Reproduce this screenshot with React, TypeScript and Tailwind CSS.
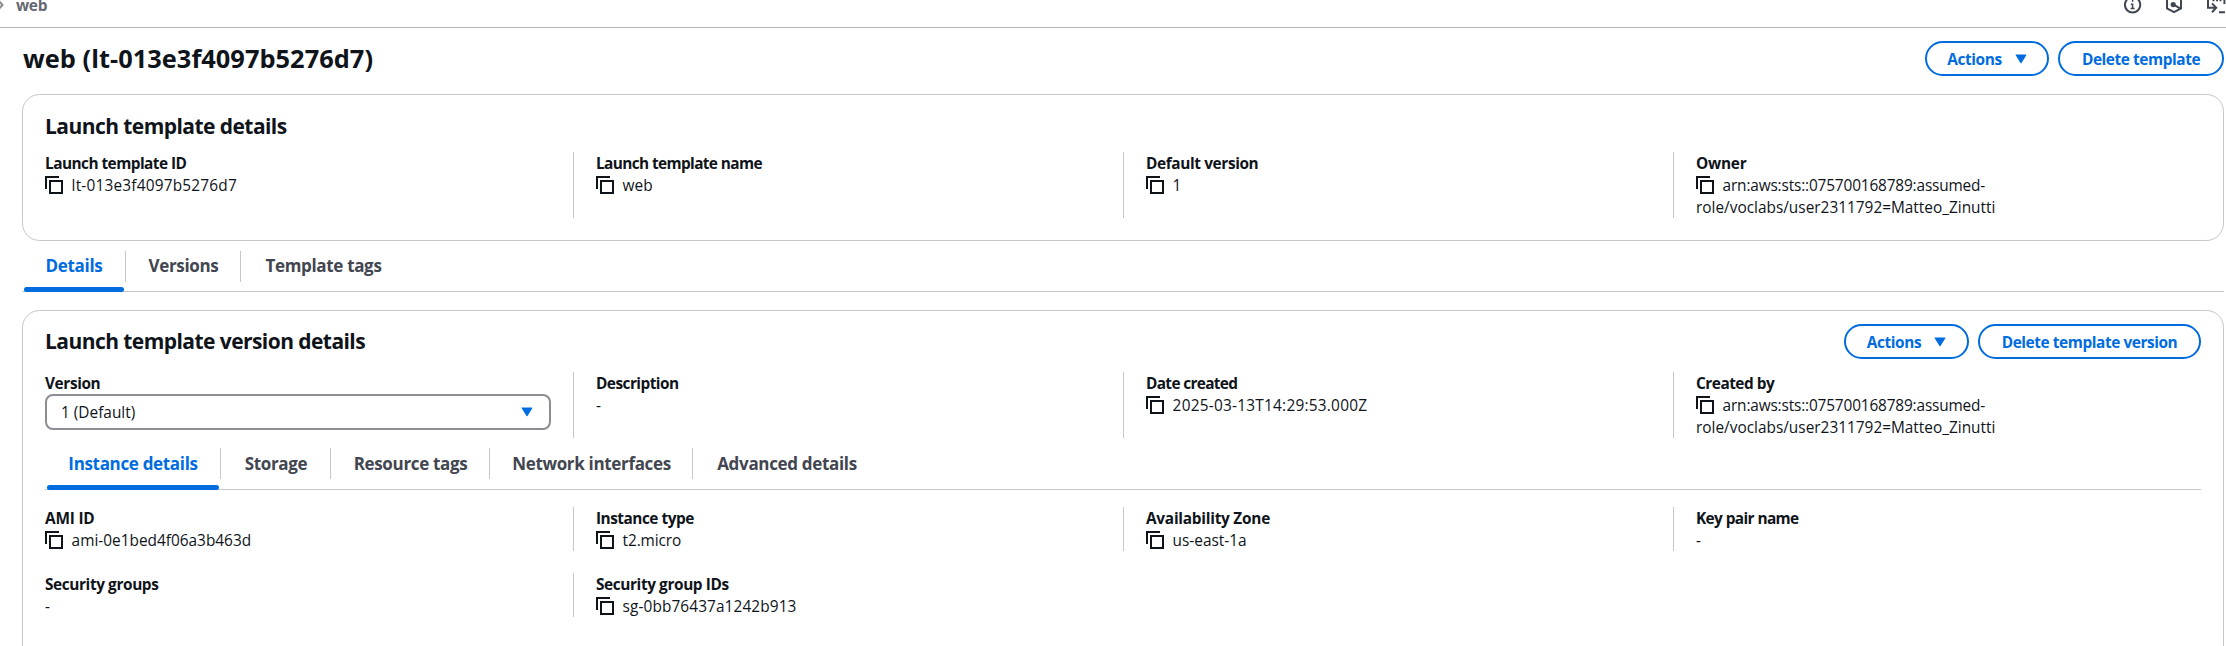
import React from "react";

const CopyIcon = () => (
  <svg className="mt-[2px] block h-[18px] w-[18px] shrink-0" viewBox="0 0 18 18" fill="none" stroke="#0f141a" strokeWidth="2">
    <path d="M1 13V1H14" />
    <rect x="5" y="5" width="12" height="12" />
  </svg>
);

const Caret = () => (
  <svg className="block h-[10px] w-[12px] shrink-0" viewBox="0 0 12 10">
    <path d="M1.2 1H10.8L6 8.6Z" fill="#006ce0" stroke="#006ce0" strokeWidth="1.2" strokeLinejoin="round" />
  </svg>
);

function Field({ label, value, value2, copy = true, first = false, ls = "", vs = "" }: {
  label: string; value: string; value2?: string; copy?: boolean; first?: boolean; ls?: string; vs?: string;
}) {
  return (
    <div className={first ? "w-[528px] shrink-0" : "w-[550px] shrink-0 border-l border-[#c6c6cd] pl-[22px]"}>
      <div className={`h-[22px] whitespace-nowrap leading-[24px] font-bold ${ls}`}>{label}</div>
      <div className={`flex h-[22px] whitespace-nowrap leading-[24px] ${vs}`}>
        {copy && <CopyIcon />}
        <span className={copy ? "ml-[8.6px]" : ""}>{value}</span>
      </div>
      {value2 && <div className="h-[22px] whitespace-nowrap leading-[24px]">{value2}</div>}
    </div>
  );
}

function Button({ children, caret = false, className }: { children: string; caret?: boolean; className: string }) {
  return (
    <button className={`flex h-[35px] items-center justify-center rounded-full border-2 border-[#006ce0] font-bold tracking-[-0.42px] text-[#006ce0] ${className}`}>
      <span className="pt-[2px] whitespace-nowrap">{children}</span>
      {caret && <span className="ml-[13px]"><Caret /></span>}
    </button>
  );
}

function Tab({ children, active = false, last = false, className }: { children: string; active?: boolean; last?: boolean; className: string }) {
  return (
    <div className={`relative flex h-full shrink-0 justify-center ${className}`}>
      <span className={`text-[17px] font-bold tracking-[-0.33px] whitespace-nowrap ${active ? "text-[#006ce0]" : "text-[#424650]"}`}>{children}</span>
      {!last && <span className="absolute top-0 right-0 h-[31px] w-px bg-[#c6c6cd]" />}
      {active && <span className="absolute right-[2px] -bottom-px left-[2px] h-[5px] rounded-[3px] bg-[#006ce0]" />}
    </div>
  );
}

export default function App() {
  return (
    <div className="h-[646px] w-[2226px] overflow-hidden bg-white font-['Open_Sans',sans-serif] text-[15.4px] leading-[22px] text-[#0f141a]">
      <header className="flex h-[28px] items-start justify-between border-b border-[#b4b4bb]">
        <div className="-mt-[5px] flex">
          <svg className="mt-[3px] h-[14px] w-[4px]" viewBox="0 0 4 14" fill="none" stroke="#8c8c94" strokeWidth="2"><path d="M-2 2L2.5 7L-2 12" /></svg>
          <span className="ml-[12px] font-bold tracking-[-0.3px] text-[#656871]">web</span>
        </div>
        <svg className="h-[16px] w-[102px]" viewBox="0 0 102 16" fill="none" stroke="#424650" strokeWidth="2">
          <circle cx="8.6" cy="4.8" r="7.7" />
          <path d="M8.6 3.6V9M8.6 0V1.8M6.8 4.2H8.6M6.6 8.6H10.6" strokeWidth="1.5" />
          <path d="M43 0V8.4L50 12.2L57 8.4V0" />
          <circle cx="49.2" cy="4.6" r="2.6" fill="#424650" stroke="none" />
          <path d="M49.5 4.6L56.5 8.6" />
          <path d="M84 0V7.8H91.5M88 3.4L92.2 7.8L88 12.2M95 12.2H101M100.4 0V4M89.5 0V1.2M93 0V1.2M96.5 0V1.2" />
        </svg>
      </header>

      <div className="flex h-[66px] items-start justify-between pt-[13px] pr-[2px] pl-[23px]">
        <h1 className="-mt-px text-[25.4px] leading-[36px] font-bold tracking-[0.03px] whitespace-nowrap">web (lt-013e3f4097b5276d7)</h1>
        <div className="flex gap-[9px]">
          <Button caret className="w-[124px]">Actions</Button>
          <Button className="w-[166px]">Delete template</Button>
        </div>
      </div>

      <section className="ml-[22px] h-[147px] w-[2202px] rounded-[17.6px] border border-[#c6c6cd] pl-[22px]">
        <h2 className="mt-[18px] h-[39px] text-[21px] leading-[27px] font-bold tracking-[-0.56px] whitespace-nowrap">Launch template details</h2>
        <div className="flex h-[66px]">
          <Field first label="Launch template ID" ls="tracking-[-0.54px]" value="lt-013e3f4097b5276d7" vs="tracking-[0.2px]" />
          <Field label="Launch template name" ls="tracking-[-0.62px]" value="web" />
          <Field label="Default version" ls="tracking-[-0.38px]" value="1" />
          <Field label="Owner" ls="tracking-[-0.25px]" value="arn:aws:sts::075700168789:assumed-" vs="tracking-[-0.16px]" value2="role/voclabs/user2311792=Matteo_Zinutti" />
        </div>
      </section>

      <nav className="mt-[10px] ml-[22px] flex h-[41px] w-[2202px] border-b border-[#c6c6cd] leading-[30px]">
        <Tab active className="w-[104px]">Details</Tab>
        <Tab className="w-[115px]">Versions</Tab>
        <Tab last className="w-[165px]">Template tags</Tab>
      </nav>

      <section className="mt-[18px] ml-[22px] h-[360px] w-[2202px] rounded-[17.6px] border border-[#c6c6cd] pr-[22px] pl-[22px]">
        <div className="flex h-[61px] items-start justify-between pt-[13px]">
          <h2 className="mt-[4px] text-[21px] leading-[27px] font-bold tracking-[-0.56px] whitespace-nowrap">Launch template version details</h2>
          <div className="flex gap-[9px]">
            <Button caret className="w-[125px]">Actions</Button>
            <Button className="w-[223px]">Delete template version</Button>
          </div>
        </div>
        <div className="flex h-[66px]">
          <div className="w-[528px] shrink-0">
            <div className="h-[22px] leading-[24px] font-bold tracking-[-0.4px]">Version</div>
            <div className="flex h-[36px] w-[506px] items-center justify-between rounded-[8px] border-2 border-[#8c8c94] pr-[16px] pl-[14px]">
              <span className="pt-[2px]">1 (Default)</span><Caret />
            </div>
          </div>
          <Field copy={false} label="Description" ls="tracking-[-0.54px]" value="-" />
          <Field label="Date created" ls="tracking-[-0.66px]" value="2025-03-13T14:29:53.000Z" vs="tracking-[0.24px]" />
          <Field label="Created by" ls="tracking-[-0.5px]" value="arn:aws:sts::075700168789:assumed-" vs="tracking-[-0.16px]" value2="role/voclabs/user2311792=Matteo_Zinutti" />
        </div>
        <nav className="mt-[10px] flex h-[42px] w-[2156px] border-b border-[#c6c6cd] leading-[31px]">
          <Tab active className="w-[176px]">Instance details</Tab>
          <Tab className="w-[110px]">Storage</Tab>
          <Tab className="w-[159px]">Resource tags</Tab>
          <Tab className="w-[203px]">Network interfaces</Tab>
          <Tab last className="w-[188px]">Advanced details</Tab>
        </nav>
        <div className="mt-[17px] flex h-[44px]">
          <Field first label="AMI ID" ls="tracking-[-0.2px]" value="ami-0e1bed4f06a3b463d" />
          <Field label="Instance type" ls="tracking-[-0.5px]" value="t2.micro" vs="tracking-[-0.1px]" />
          <Field label="Availability Zone" ls="tracking-[-0.25px]" value="us-east-1a" />
          <Field copy={false} label="Key pair name" ls="tracking-[-0.6px]" value="-" />
        </div>
        <div className="mt-[22px] flex h-[44px]">
          <Field first copy={false} label="Security groups" ls="tracking-[-0.4px]" value="-" />
          <Field label="Security group IDs" ls="tracking-[-0.4px]" value="sg-0bb76437a1242b913" vs="tracking-[0.1px]" />
        </div>
      </section>
    </div>
  );
}
